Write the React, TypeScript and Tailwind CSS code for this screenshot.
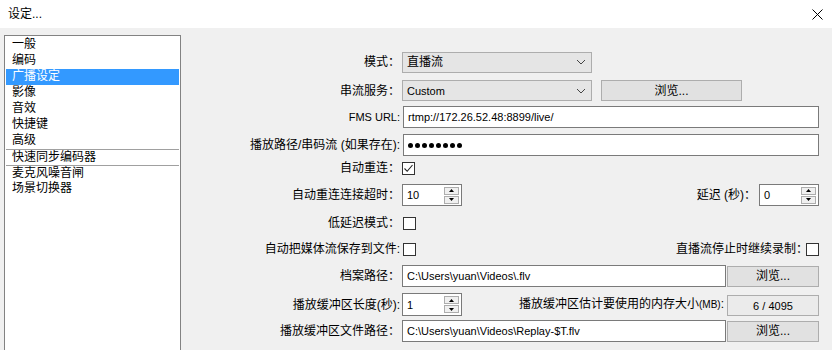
import React from "react";

const FONT = { fontFamily: '"Liberation Sans", "Noto Sans CJK SC", sans-serif' };

function Chevron() {
  return (
    <svg width="10" height="6" viewBox="0 0 10 6" className="shrink-0">
      <path d="M1 1 L5 5 L9 1" fill="none" stroke="#444" strokeWidth="1" />
    </svg>
  );
}

function Dropdown({ children, ascii }: { children: React.ReactNode; ascii?: boolean }) {
  return (
    <div className="ml-[2px] w-[190px] h-[21px] bg-[#e5e5e5] border border-[#adadad] flex items-center justify-between pl-[4px] pr-[5px]">
      <span className={ascii ? "text-[11px]" : "text-[12px]"}>{children}</span>
      <Chevron />
    </div>
  );
}

function Button({ w, children, className = "" }: { w: string; children: React.ReactNode; className?: string }) {
  return (
    <div className={`${w} h-[21px] bg-[#e1e1e1] border border-[#adadad] flex items-center justify-center text-[12px] ${className}`}>
      {children}
    </div>
  );
}

function Input({ w, children, className = "" }: { w: string; children?: React.ReactNode; className?: string }) {
  return (
    <div className={`${w} h-[22px] bg-white border border-[#7a7a7a] flex items-center pl-[4px] text-[11px] ${className}`}>
      {children}
    </div>
  );
}

function Check({ checked }: { checked?: boolean }) {
  return (
    <div className="w-[13px] h-[13px] bg-white border border-[#333] flex items-center justify-center shrink-0">
      {checked && (
        <svg width="11" height="11" viewBox="0 0 11 11">
          <path d="M1.5 5.5 L4.2 8.3 L9.5 2" fill="none" stroke="#222" strokeWidth="1.1" />
        </svg>
      )}
    </div>
  );
}

function Spinner({ value, className = "" }: { value: string; className?: string }) {
  return (
    <div className={`w-[60px] h-[22px] bg-white border border-[#7a7a7a] flex items-center justify-between pl-[4px] pr-[2px] ${className}`}>
      <span className="text-[11px]">{value}</span>
      <div className="flex flex-col gap-[1px]">
        <div className="w-[15px] h-[8px] bg-[#f0f0f0] border border-[#adadad] flex items-center justify-center">
          <svg width="5" height="3" viewBox="0 0 5 3"><path d="M0 3 L2.5 0 L5 3 Z" fill="#000" /></svg>
        </div>
        <div className="w-[15px] h-[8px] bg-[#f0f0f0] border border-[#adadad] flex items-center justify-center">
          <svg width="5" height="3" viewBox="0 0 5 3"><path d="M0 0 L2.5 3 L5 0 Z" fill="#000" /></svg>
        </div>
      </div>
    </div>
  );
}

function Label({ children }: { children: React.ReactNode }) {
  return <div className="w-[219px] shrink-0 text-right whitespace-nowrap">{children}</div>;
}

const items = ["一般", "编码", "广播设定", "影像", "音效", "快捷键", "高级", "快速同步编码器", "麦克风噪音闸", "场景切换器"];

export default function App() {
  return (
    <div className="w-[832px] h-[350px] overflow-hidden text-[12px] leading-[16px] text-black" style={FONT}>
      <div className="h-[28px] bg-white flex items-center justify-between pl-[8px] pr-[9px]">
        <span>设定...</span>
        <svg width="11" height="11" viewBox="0 0 11 11">
          <path d="M0.5 0.5 L10.5 10.5 M10.5 0.5 L0.5 10.5" stroke="#000" strokeWidth="1" />
        </svg>
      </div>
      <div className="h-[322px] bg-[#f0f0f0] flex">
        <div className="ml-[4px] mt-[7px] w-[177px] h-[330px] shrink-0 bg-white border border-[#828282] p-[1px]">
          {items.map((it, i) => (
            <div
              key={it}
              className={`h-[16px] pl-[6px] leading-[15px] ${i === 2 ? "bg-[#3399ff] text-white" : ""} ${i === 7 || i === 8 ? "border-t border-[#a0a0a0]" : ""}`}
            >
              {it}
            </div>
          ))}
        </div>
        <div className="flex-1 pt-[24px] pr-[13px] flex flex-col">
          <div className="h-[20px] flex items-center">
            <Label>模式：</Label>
            <Dropdown>直播流</Dropdown>
          </div>
          <div className="mt-[7px] h-[23px] flex items-center">
            <Label>串流服务：</Label>
            <Dropdown ascii>Custom</Dropdown>
            <Button w="w-[141px]" className="ml-[9px]">浏览...</Button>
          </div>
          <div className="mt-[4px] h-[22px] flex items-center">
            <Label><span className="text-[11px]">FMS URL:</span></Label>
            <Input w="flex-1" className="ml-[3px]">rtmp://172.26.52.48:8899/live/</Input>
          </div>
          <div className="mt-[6px] h-[22px] flex items-center">
            <Label>播放路径/串码流 (如果存在):</Label>
            <Input w="flex-1" className="ml-[3px]">
              <div className="flex gap-[2px]">
                {Array.from({ length: 8 }).map((_, i) => (
                  <span key={i} className="w-[5px] h-[5px] rounded-full bg-black" />
                ))}
              </div>
            </Input>
          </div>
          <div className="mt-[4px] h-[16px] flex items-center">
            <Label>自动重连：</Label>
            <div className="ml-[2px]"><Check checked /></div>
          </div>
          <div className="mt-[8px] h-[22px] flex items-center">
            <Label>自动重连连接超时：</Label>
            <Spinner value="10" className="ml-[2px]" />
            <div className="flex-1" />
            <span className="mr-[3px]">延迟 (秒)：</span>
            <Spinner value="0" />
          </div>
          <div className="mt-[9px] h-[16px] flex items-center">
            <Label>低延迟模式：</Label>
            <div className="ml-[3px]"><Check /></div>
          </div>
          <div className="mt-[10px] h-[16px] flex items-center">
            <Label>自动把媒体流保存到文件:</Label>
            <div className="ml-[3px]"><Check /></div>
            <div className="flex-1" />
            <span className="mr-[-2px]">直播流停止时继续录制：</span>
            <Check />
          </div>
          <div className="mt-[8px] h-[22px] flex items-center">
            <Label>档案路径：</Label>
            <Input w="w-[324px]" className="ml-[2px]">C:\Users\yuan\Videos\.flv</Input>
            <Button w="w-[92px]" className="ml-[1px] h-[20px]">浏览...</Button>
          </div>
          <div className="mt-[6px] h-[23px] flex items-center">
            <Label>播放缓冲区长度(秒):</Label>
            <Spinner value="1" className="ml-[2px] h-[23px]" />
            <div className="flex-1" />
            <span className="mr-[3px]">播放缓冲区估计要使用的内存大小<span className="text-[10px]">(MB)</span>:</span>
            <div className="w-[92px] h-[21px] mt-[2px] bg-[#ebebeb] border border-[#adadad] flex items-center justify-center text-[11px]">6 / 4095</div>
          </div>
          <div className="mt-[4px] h-[22px] flex items-center">
            <Label>播放缓冲区文件路径：</Label>
            <Input w="w-[324px]" className="ml-[2px]">C:\Users\yuan\Videos\Replay-$T.flv</Input>
            <Button w="w-[92px]" className="ml-[1px] h-[20px]">浏览...</Button>
          </div>
        </div>
      </div>
    </div>
  );
}
